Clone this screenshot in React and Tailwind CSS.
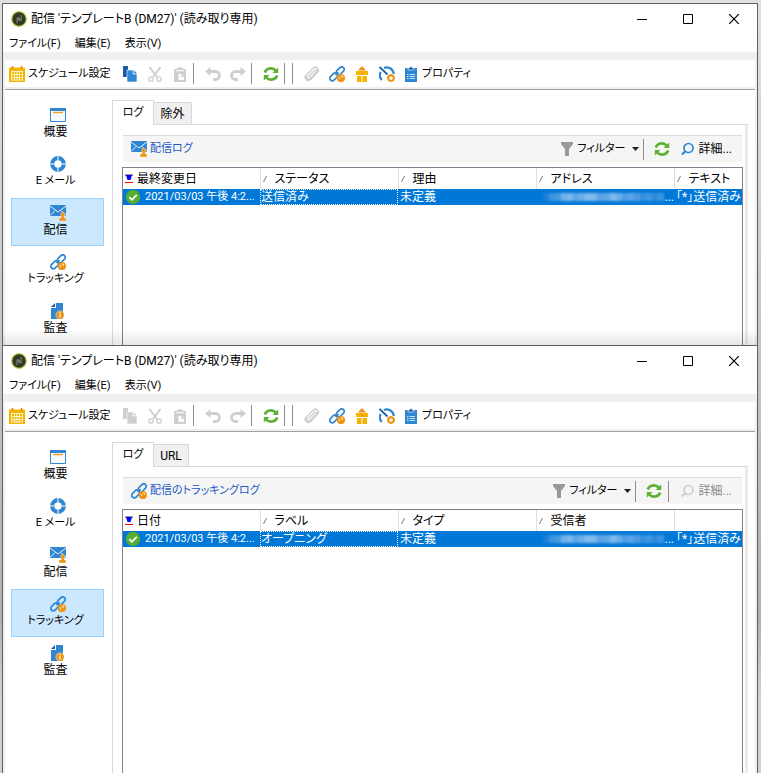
import React from "react";

const font = "font-['Roboto','Noto_Sans_CJK_JP',sans-serif] [font-feature-settings:'palt']";
const BLUE = "#2f86d2";
const ORANGE = "#ef9312";
const OFF = "#cfcfcf";

const Svg = ({ children, className = "size-4", box = "0 0 16 16" }) => (
  <svg viewBox={box} className={className + " shrink-0"} fill="none" aria-hidden="true">
    {children}
  </svg>
);

const Logo = () => (
  <Svg>
    <circle cx="8" cy="8" r="7.2" fill="#34382c" stroke="#a9bf22" strokeWidth="1.1" />
    <path d="M6 12.200V6.800h1.800v2.700M10.200 3.800v5.700H8.300V6.800" stroke="#8f9781" strokeWidth=".9" />
  </Svg>
);
const Calendar = () => (
  <Svg>
    <path d="M0 1.500h16V16H0z" fill="#f2b600" />
    <path d="M3.500 0v3M12.500 0v3" stroke="#e58e12" strokeWidth="1.600" />
    <path d="M2.500 5.500h11M2.500 8.500h11M2.500 11.500h11M2.500 14h11M2.500 5v9.500M5.500 5v9.500M8 5v9.500M10.500 5v9.500M13.500 5v9.500" stroke="#fff6d5" strokeWidth=".9" />
  </Svg>
);
const Copy = ({ off }) => (
  <Svg>
    <path d="M1 0h5v11H1z" fill={off ? OFF : "#1a5ba8"} />
    <path d="M5 4h6v4h4v8H5z" fill={off ? OFF : BLUE} stroke="#fff" strokeWidth=".6" />
    <path d="M11.500 4L15 7.500h-3.500z" fill={off ? OFF : BLUE} />
  </Svg>
);
const Cut = () => (
  <Svg>
    <path d="M2.500 1l7.500 10M13.500 1L6 11" stroke={OFF} strokeWidth="2" />
    <circle cx="4" cy="13" r="2.200" stroke={OFF} strokeWidth="1.300" />
    <circle cx="12" cy="13" r="2.200" stroke={OFF} strokeWidth="1.300" />
  </Svg>
);
const Paste = () => (
  <Svg>
    <path d="M2 3h12v13H2z" fill={OFF} />
    <path d="M5.500 4V2.500h1.500a1 1 0 0 1 2 0h1.500V4" stroke={OFF} strokeWidth="1.500" />
    <path d="M4 4.800h8" stroke="#fff" />
    <path d="M6.500 8h3l2.500 2.500V14H6.500z" fill="#fff" />
    <path d="M9.500 8v2.500H12" stroke={OFF} />
  </Svg>
);
const Undo = ({ flip }) => (
  <Svg className={flip ? "size-4 -scale-x-100" : "size-4"}>
    <path d="M0 5.500L5.500 1v9z" fill={OFF} />
    <path d="M4 5.500h6.500a4 4 0 0 1 0 8H8" stroke={OFF} strokeWidth="2.800" />
  </Svg>
);
const Refresh = () => (
  <Svg>
    <path d="M1.800 6.500a6.300 5.600 0 0 1 11-2M14.200 9.500a6.300 5.600 0 0 1-11 2" stroke="#5cb130" strokeWidth="2.600" />
    <path d="M15.200 1.500V7H9.500zM.8 14.500V9h5.700z" fill="#5cb130" />
  </Svg>
);
const Clip = () => (
  <Svg>
    <path d="M4 11l6.500-6.500c1.300-1.300 3 .4 1.800 1.700L6.500 12c-2.600 2.500-6-.800-3.600-3.400L9 2.300c3-3 7.200 1.200 4.300 4.200L7 13.200c-3.300 3-7.300-.500-5.300-3.900" stroke={OFF} strokeWidth="1.500" />
  </Svg>
);
const LinkIcon = () => (
  <Svg>
    <rect x="6.800" y="2.300" width="9" height="5" rx="2.500" transform="rotate(-45 11.300 4.800)" stroke={BLUE} strokeWidth="1.700" />
    <rect x="0.200" y="8.400" width="9" height="5" rx="2.500" transform="rotate(-45 4.700 10.900)" stroke={BLUE} strokeWidth="1.700" />
    <path d="M6.500 9.300l3.200-3.200" stroke={BLUE} strokeWidth="1.500" />
    <circle cx="11.900" cy="12" r="4.100" fill={ORANGE} />
    <path d="M9.300 10.600l1.900 1.200-.4 1.900zM12.400 9l1.900.9-.6 2.200-1.500-1z" fill="#fff" fillOpacity=".75" />
  </Svg>
);
const Gift = () => (
  <Svg>
    <path d="M2 5h12v4H2zM3 10h4.500v6H3zM8.500 10H13v6H8.500z" fill="#f4b400" />
    <path d="M4 4.500L6 2l2-1.700L10 2l2 2.500z" fill="#ee951a" />
    <path d="M8 5v4" stroke="#ee951a" />
  </Svg>
);
const Gauge = () => (
  <Svg>
    <path d="M2.800 14A7 7 0 0 1 1.600 6M5 1.900A7.200 7.200 0 0 1 14.800 8" stroke={BLUE} strokeWidth="2.200" />
    <path d="M.5 1l8 7.500" stroke="#1b62aa" strokeWidth="1.800" />
    <circle cx="12" cy="12" r="2.800" stroke={ORANGE} strokeWidth="1.900" />
    <path d="M12 8v1.500M12 14.500V16M8 12h1.500M14.500 12H16M9.200 9.200l1 1M13.800 13.800l1 1M14.800 9.200l-1 1M10.200 13.800l-1 1" stroke={ORANGE} strokeWidth="1.300" />
  </Svg>
);
const Clipboard = () => (
  <Svg>
    <path d="M2 2h12v14H2z" fill={BLUE} />
    <path d="M5 4V2h1.500a1.500 1.500 0 0 1 3 0H11v2z" fill="#1b5ea9" stroke="#fff" strokeWidth=".6" />
    <path d="M4 8.500h1.500M6.500 8.500H12M4 10.500h1.500M6.500 10.500H12M4 12.500h1.500M6.500 12.500H12" stroke="#d7e8f7" strokeWidth=".9" />
  </Svg>
);
const Overview = () => (
  <Svg>
    <path d="M.5 2h15v12.500H.5z" fill="#f7fafc" stroke={BLUE} />
    <path d="M0 1h16v3H0z" fill={BLUE} />
    <path d="M3 5.500h10" stroke="#f5a020" strokeWidth="1.400" />
  </Svg>
);
const Ring = () => (
  <Svg>
    <circle cx="8" cy="8" r="5.800" stroke={BLUE} strokeWidth="4.200" />
    <path d="M0 8h4.500M11.500 8H16M8 0v4.500M8 11.500V16" stroke="#fff" strokeWidth="1" />
  </Svg>
);
const Mail = () => (
  <Svg>
    <path d="M0 0h16v11H0z" fill={BLUE} />
    <path d="M0 1l8 6 8-6M0 10.500L5 5.500M16 10.500L11 5.500" stroke="#fff" strokeWidth=".9" />
    <path d="M9 16v-2.500l2.500-1.200C9.800 9 11 7.300 12.700 7.300s3 1.700 1.200 5L16 13.500V16z" fill={ORANGE} stroke="#fff" strokeWidth=".4" />
  </Svg>
);
const Audit = () => (
  <Svg>
    <path d="M6 0h7v16H1V5h5z" fill={BLUE} />
    <path d="M1 4l4-4v4z" fill="#1c5da5" />
    <circle cx="10" cy="12" r="4.200" fill={ORANGE} stroke="#fff" strokeWidth=".4" />
    <path d="M10 9v1.200M10 11v3.200" stroke="#fff" strokeWidth="1.300" />
  </Svg>
);
const Funnel = () => (
  <Svg>
    <path d="M2 1h12v2L10 8v7H6V8L2 3z" fill="#999" />
  </Svg>
);
const Magnifier = ({ off }) => (
  <Svg>
    <circle cx="8.500" cy="7" r="4.500" stroke={off ? OFF : BLUE} strokeWidth="1.700" />
    <path d="M5.500 10L2 13.500" stroke={off ? OFF : BLUE} strokeWidth="2.200" />
  </Svg>
);
const Check = () => (
  <Svg>
    <circle cx="8" cy="8" r="7.200" fill="#57ac34" />
    <path d="M4.300 8.200l2.600 2.600 4.900-5" stroke="#fff" strokeWidth="1.700" />
  </Svg>
);

const Sep = () => <span className="ml-px mr-1.5 h-[21px] w-px shrink-0 bg-[#8d8d8d]" />;
const Tool = ({ label, children }) => (
  <button type="button" aria-label={label} className="flex w-[25px] shrink-0 justify-center">
    {children}
  </button>
);

const MENUS = ["ファイル(F)", "編集(E)", "表示(V)"];
const NAV = [
  ["概要", Overview],
  ["E メール", Ring],
  ["配信", Mail],
  ["トラッキング", LinkIcon],
  ["監査", Audit],
];
const MOSAIC = [
  "bg-[#1a80da]", "bg-[#3b94e0]", "bg-[#459ae1]", "bg-[#6fb1e9]", "bg-[#79b6ea]", "bg-[#5ea6e5]",
  "bg-[#6db0e8]", "bg-[#84bbec]", "bg-[#7cb7eb]", "bg-[#5aa4e5]", "bg-[#60a7e6]", "bg-[#7fb9eb]",
  "bg-[#6aaee8]", "bg-[#4d9de3]", "bg-[#5aa4e5]", "bg-[#489ae1]", "bg-[#3590df]", "bg-[#4096e0]",
  "bg-[#2a8add]", "bg-[#3b94e0]",
];

function TitleBar() {
  return (
    <header className="flex h-[30px] items-center pl-2">
      <Logo />
      <h1 className="ml-1 grow">配信 'テンプレートB (DM27)' (読み取り専用)</h1>
      <button type="button" aria-label="最小化" className="flex h-full w-[46px] items-center justify-center">
        <Svg className="size-2.5" box="0 0 10 10"><path d="M0 5.500h10" stroke="#000" /></Svg>
      </button>
      <button type="button" aria-label="最大化" className="flex h-full w-[46px] items-center justify-center">
        <Svg className="size-2.5" box="0 0 10 10"><path d="M.5.5h9v9h-9z" stroke="#000" /></Svg>
      </button>
      <button type="button" aria-label="閉じる" className="flex h-full w-[46px] items-center justify-center">
        <Svg className="size-2.5" box="0 0 10 10"><path d="M0 0l10 10M10 0L0 10" stroke="#000" strokeWidth="1.200" /></Svg>
      </button>
    </header>
  );
}

function ToolBar({ copyOff }) {
  return (
    <div className="text-[11px]">
      <div className="h-2 bg-[#f0f0f0]" />
      <div className="flex h-[27px] items-center">
        <button type="button" className="flex w-28 shrink-0 items-center gap-[3px] whitespace-nowrap pl-1">
          <Calendar />スケジュール設定
        </button>
        <Tool label="コピー"><Copy off={copyOff} /></Tool>
        <Tool label="切り取り"><Cut /></Tool>
        <Tool label="貼り付け"><Paste /></Tool>
        <Sep />
        <Tool label="元に戻す"><Undo /></Tool>
        <Tool label="やり直し"><Undo flip /></Tool>
        <Sep />
        <Tool label="更新"><Refresh /></Tool>
        <Sep />
        <Sep />
        <Tool label="添付"><Clip /></Tool>
        <Tool label="リンク"><LinkIcon /></Tool>
        <Tool label="オファー"><Gift /></Tool>
        <Tool label="測定"><Gauge /></Tool>
        <button type="button" className="flex items-center gap-[3px] whitespace-nowrap pl-1">
          <Clipboard />プロパティ
        </button>
      </div>
      <div className="h-[3px] border-b border-[#a0a0a0] bg-[#f0f0f0]" />
    </div>
  );
}

function LogTable({ columns, status }) {
  return (
    <table className="w-full table-fixed border-collapse text-left">
      <colgroup>
        <col className="w-[137px]" />
        <col className="w-[138px]" />
        <col className="w-[138px]" />
        <col className="w-[138px]" />
        <col />
      </colgroup>
      <thead>
        <tr className="h-[21px]">
          {columns.map((c, i) => (
            <th key={i} className={"p-0 font-normal " + (i < 4 ? "border-r border-[#e0e0e0]" : "")}>
              <span className="flex items-center">
                {i === 0 ? (
                  <Svg className="ml-0.5 mr-1 h-2.5 w-2" box="0 0 8 10">
                    <path d="M0 1h8" stroke="#333" /><path d="M1 1h6L5.500 6h-3z" fill="#00f" /><path d="M0 8.500h8" stroke="#f00" />
                  </Svg>
                ) : c && (
                  <Svg className="ml-0.5 mr-2 h-1.5 w-1" box="0 0 4 6"><path d="M.5 6l3-6" stroke="#777" /></Svg>
                )}
                {c}
              </span>
            </th>
          ))}
        </tr>
      </thead>
      <tbody>
        <tr className="h-4 whitespace-nowrap bg-[#0078d7] leading-4 text-white">
          <td className="p-0 text-[11px]"><span className="flex items-center gap-1 pl-0.5"><Check />2021/03/03 午後 4:2...</span></td>
          <td className="p-0"><span className="block h-4 border border-dotted border-white leading-[14px]">{status}</span></td>
          <td className="p-0 pl-0.5">未定義</td>
          <td className="p-0">
            <span className="flex items-center justify-end">
              <span className="flex h-2 w-[122px] blur-[1px]">
                {MOSAIC.map((c, i) => <span key={i} className={"grow " + c} />)}
              </span>
              ...
            </span>
          </td>
          <td className="overflow-hidden p-0 pl-0.5">「*」送信済み</td>
        </tr>
      </tbody>
    </table>
  );
}

function DeliveryWindow({ copyOff, active, tab2, heading, HeadIcon, detailsOff, columns, status, className, shade }) {
  return (
    <section className={"relative flex flex-col border border-[#606060] bg-white " + className}>
      <TitleBar />
      <nav className="flex h-[18px] items-center gap-[14px] pl-1.5 pt-0.5">
        {MENUS.map((m) => (
          <button key={m} type="button" className="text-[11px]">{m}</button>
        ))}
      </nav>
      <div className="flex min-h-0 grow flex-col border-x-2 border-[#f0f0f0]">
        <ToolBar copyOff={copyOff} />
        <div className="flex min-h-0 grow pt-2.5">
          <nav className="flex w-[107px] shrink-0 flex-col gap-px pl-1.5 pr-2">
            {NAV.map(([label, Icon], i) => (
              <button
                key={label}
                type="button"
                className={
                  "flex h-12 w-full shrink-0 flex-col items-center border pt-1.5 leading-[18px] " +
                  (i === active ? "border-[#99d1ff] bg-[#cce8ff] " : "border-transparent ") +
                  (i === 1 || i === 3 ? "text-[11px]" : "text-[12px]")
                }
              >
                <Icon />
                <span className="pr-1">{label}</span>
              </button>
            ))}
          </nav>
          <div className="mr-[7px] flex min-w-0 grow flex-col">
            <div className="flex items-end" role="tablist">
              <button type="button" role="tab" aria-selected="true" className="h-[25px] w-[42px] border-l border-r border-t border-[#d9d9d9] bg-white text-[11px]">ログ</button>
              <button type="button" role="tab" aria-selected="false" className={"h-[23px] border border-l-0 border-[#d9d9d9] bg-[#f0f0f0] " + (tab2 === "URL" ? "w-[35px]" : "w-[38px]")}>{tab2}</button>
              <span className="grow border-b border-[#d9d9d9]" />
            </div>
            <div className="flex grow flex-col border-l border-[#d9d9d9] pl-[9px]">
              <div className="flex grow flex-col border-r-[3px] border-[#ebebeb] pr-0.5 pt-2.5">
                <div className="mx-px flex h-[27px] items-center border-t border-[#dcdcdc] bg-[#f5f5f5] pl-2 pr-2.5 text-[11px]">
                  <HeadIcon />
                  <h2 className="ml-[3px] grow text-[#2157c4]">{heading}</h2>
                  <button type="button" className="flex items-center gap-0.5">
                    <Funnel />フィルター
                    <Svg className="ml-1 mr-[3px] h-1 w-[7px]" box="0 0 7 4"><path d="M0 0h7L3.500 4z" fill="#222" /></Svg>
                  </button>
                  <Sep />
                  <Tool label="更新"><Refresh /></Tool>
                  {detailsOff && <Sep />}
                  <button type="button" className={"ml-[5px] flex items-center gap-[3px] text-[12px] " + (detailsOff ? "text-[#8b8b8b]" : "")}>
                    <Magnifier off={detailsOff} />詳細...
                  </button>
                </div>
                <div className="mt-[5px] grow border-l border-r border-t border-[#7f8090]">
                  <LogTable columns={columns} status={status} />
                </div>
              </div>
            </div>
          </div>
        </div>
      </div>
      {shade && <div className="pointer-events-none absolute inset-x-0 bottom-0 h-4 bg-linear-to-b from-transparent to-black/10" />}
    </section>
  );
}

export default function App() {
  return (
    <main className={"flex h-screen flex-col bg-linear-to-b from-[#e0e0e0] from-0% via-[#b0b0b0] via-80% to-[#d0d0d0] to-90% pl-0.5 pr-[3px] pt-[3px] text-[12px] leading-4 text-black " + font}>
      <DeliveryWindow
        className="h-[342px] shrink-0 border-b-0"
        active={2}
        tab2="除外"
        heading="配信ログ"
        HeadIcon={Mail}
        columns={["最終変更日", "ステータス", "理由", "アドレス", "テキスト"]}
        status="送信済み"
        shade
      />
      <DeliveryWindow
        className="min-h-0 grow border-b-0"
        copyOff
        active={3}
        tab2="URL"
        heading="配信のトラッキングログ"
        HeadIcon={LinkIcon}
        detailsOff
        columns={["日付", "ラベル", "タイプ", "受信者", ""]}
        status="オープニング"
      />
    </main>
  );
}
